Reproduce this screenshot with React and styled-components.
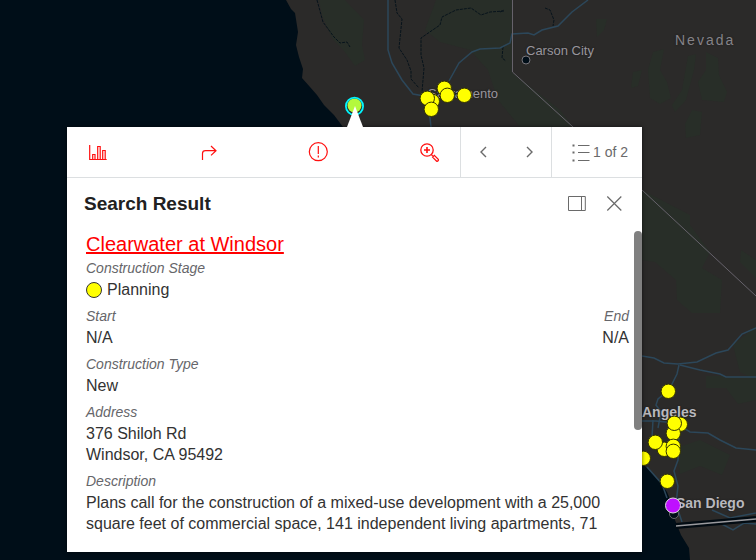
import React from "react";
import styled, { createGlobalStyle, css } from "styled-components";

const GlobalStyle = createGlobalStyle`
  * {
    box-sizing: border-box;
  }

  body {
    margin: 0;
    background: #000e18;
    font-family: "Liberation Sans", Arial, sans-serif;
  }
`;

const Page = styled.main`
  position: relative;
  display: flex;
  height: 100vh;
  min-height: 360px;
  padding: 127px 114px 8px 67px;
  overflow: hidden;
`;

const MapLayer = styled.div`
  position: absolute;
  inset: 0;
`;

const MapDrawing = styled.svg`
  position: absolute;
  inset: 0;
  width: 100%;
  height: 100%;
`;

const PlaceName = styled.span`
  position: absolute;
  font-size: 13px;
  line-height: 16px;
  color: #99969d;
  white-space: nowrap;
  text-shadow: 0 0 2px #1c1c1c;

  ${(props) =>
    props.$kind === "city" &&
    css`
      font-size: 14px;
      font-weight: 700;
      color: #b9b8bd;
    `}

  ${(props) =>
    props.$kind === "state" &&
    css`
      font-size: 14px;
      letter-spacing: 2px;
      color: #858388;
    `}
`;

const Popup = styled.section`
  position: relative;
  display: flex;
  flex: 1;
  flex-direction: column;
  min-width: 0;
  background: #fff;
  box-shadow: 0 0 4px rgba(0, 0, 0, 0.6);
`;

const Pointer = styled.svg`
  position: absolute;
  left: 50%;
  bottom: 100%;
  width: 16px;
  height: 21px;
  margin-left: -8px;
`;

const Toolbar = styled.div`
  display: flex;
  flex-shrink: 0;
  height: 51px;
  border-bottom: 1px solid #dcdfe1;
`;

const ToolbarGroup = styled.div`
  display: flex;
  align-items: center;
  justify-content: space-between;
  flex: ${(props) => (props.$grow ? 1 : "none")};
  padding: 0 ${(props) => (props.$grow ? 18 : 10)}px;
  border-right: 1px solid #dcdfe1;
  gap: 22px;
`;

const IconButton = styled.button`
  display: flex;
  width: 24px;
  height: 24px;
  padding: 0;
  border: 0;
  background: none;
  color: ${(props) => (props.$accent ? "#ff0f0f" : "#6a6a6a")};
  cursor: pointer;
`;

const PagerButton = styled.button`
  display: flex;
  align-items: center;
  width: 90px;
  padding: 0 0 0 17px;
  border: 0;
  background: none;
  font-family: inherit;
  font-size: 14px;
  color: #6a6a6a;
  white-space: nowrap;
  cursor: pointer;
`;

const Icon = styled.svg`
  flex-shrink: 0;
  width: 24px;
  height: 24px;
  fill: none;
  stroke: currentColor;
`;

const Header = styled.header`
  display: flex;
  flex-shrink: 0;
  align-items: center;
  justify-content: space-between;
  height: 52px;
  padding: 0 16px 0 17px;
`;

const Title = styled.h2`
  margin: 0;
  font-size: 19px;
  line-height: 24px;
  color: #212121;
`;

const HeaderActions = styled.div`
  display: flex;
  gap: 14px;
`;

const Body = styled.div`
  display: flex;
  flex: 1;
  min-height: 0;
  padding-bottom: 16px;
`;

const Content = styled.div`
  display: flex;
  flex: 1;
  flex-direction: column;
  gap: 6px;
  min-width: 0;
  padding: 2px 5px 0 19px;
  overflow: hidden;
`;

const ScrollThumb = styled.div`
  width: 8px;
  height: 65%;
  margin-top: 1px;
  border-radius: 4px;
  background: #808080;
`;

const ResultLink = styled.a`
  align-self: flex-start;
  margin-bottom: -5px;
  font-size: 20px;
  line-height: 25px;
  color: #ff0000;
  text-decoration-thickness: 2px;
`;

const FieldRow = styled.div`
  display: flex;
  justify-content: space-between;
`;

const Field = styled.div`
  text-align: ${(props) => props.$align || "left"};
  line-height: 21px;
`;

const FieldLabel = styled.div`
  font-size: 14px;
  font-style: italic;
  color: #66666a;
`;

const FieldValue = styled.div`
  display: flex;
  align-items: center;
  gap: 5px;
  font-size: 16px;
  color: #323232;
`;

const StageDot = styled.span`
  width: 16px;
  height: 16px;
  border: 1px solid #333;
  border-radius: 50%;
  background: #ffff00;
`;

const forests = [
  "M319 0H345L364 20L362 45L365 60L355 66L345 52L332 38L322 15Z",
  "M436 0H512V72L560 110L573 127H520L498 100L488 70L470 50L440 42L425 30Z",
  "M596 19H607L604 30L597 37Z",
  "M653 52L664 49L660 70L667 82L671 98L660 104L650 98L648 70Z",
  "M688 56L696 54L694 70L686 100L675 112L672 105L682 90Z",
  "M706 52L718 58L719 75L727 92L724 102L702 100L698 82L706 70Z",
  "M692 110L702 112L700 135L686 138L685 124Z",
  "M633 72L642 70L638 86L631 88Z",
  "M642 190L690 215V225L710 252L702 268L722 280L720 313H692L677 300L676 280L655 262L642 260Z",
  "M741 250L756 260V278L740 262Z",
  "M733 345L756 326V380L740 372Z",
  "M706 376H756V400L738 404L726 388L706 388Z",
  "M676 448L700 440L730 455L722 475L700 466L680 474Z",
];

const waterways = [
  "M388 0V50L392 63L402 80L413 94L424 96L430 118L431 127",
  "M449 81L459 63L472 52L480 49L500 48L510 43L512 34L528 33L534 35L542 30L558 26L572 12L588 0",
  "M642 356L654 358L664 363L678 364L697 362L716 353L728 350L742 334L756 328",
  "M680 365L700 370L720 374L726 377L756 377",
  "M679 365L677 374L669 390L658 399L656 405L661 412L658 428",
  "M642 421H656L676 423L690 432L708 433L720 440L736 448L756 450",
  "M653 420L652 438M679 438L678 460L674 471L678 486L676 504L682 522",
  "M647 467L662 484L667 498",
  "M712 510L730 518L756 513M718 522L733 530L744 523L756 524",
];

const streams = [
  "M317 0L323 22L334 37L340 43L347 42L350 47",
  "M395 0L397 13L402 19L399 48L407 60L411 71L411 79L419 88",
  "M504 11L490 12L481 15L471 8L456 10L442 17L440 25L421 38V55L424 68L422 92L426 101",
  "M545 8L550 10L554 20L553 26M500 12L504 10M503 47L502 58L506 61",
];

const projects = [
  [432, 101],
  [427, 98],
  [431, 109],
  [444, 88],
  [447, 95],
  [464, 95],
  [668, 391],
  [680, 424],
  [673, 433],
  [674, 423],
  [664, 449],
  [673, 446],
  [655, 442],
  [673, 451],
  [643, 458],
  [667, 481],
];

const places = [
  { name: "Nevada", x: 675, y: 32, kind: "state" },
  { name: "Carson City", x: 526, y: 43, kind: "town" },
  { name: "Sacramento", x: 428, y: 86, kind: "town" },
  { name: "Angeles", x: 642, y: 404, kind: "city" },
  { name: "San Diego", x: 676, y: 495, kind: "city" },
];

function BaseMap() {
  return (
    <MapLayer>
      <MapDrawing
        viewBox="0 0 756 560"
        preserveAspectRatio="xMinYMin slice"
        fill="none"
        aria-hidden="true"
      >
        <path
          fill="#2b2a29"
          d="M286 0L291 9L295 13L298 32L296 45L299 57L303 69L302 78L310 87L317 95L324 105L334 115L343 127L642 463L657 478L667 492L672 504L675 520L681 535L689 548L690 560H756V0Z"
        />
        {forests.map((d) => (
          <path key={d} d={d} fill="#282e28" />
        ))}
        {streams.map((d) => (
          <path key={d} d={d} stroke="#07131b" strokeDasharray="3 1" />
        ))}
        {waterways.map((d) => (
          <path key={d} d={d} stroke="#2c475a" strokeWidth="1.5" />
        ))}
        <path d="M512.5 0V72L573 127L642 190L756 296" stroke="#66626b" />
        <path d="M676 526L756 519" stroke="#020b12" strokeWidth="6" />
        <path d="M676 526L756 519" stroke="#9a9a9e" strokeWidth="1.3" />
        <circle cx="526" cy="60" r="4" fill="#000e18" stroke="#77757b" />
        <circle cx="674" cy="514" r="4.5" fill="#000e18" stroke="#66656b" />
      </MapDrawing>

      {places.map((place) => (
        <PlaceName
          key={place.name}
          $kind={place.kind}
          style={{ left: place.x, top: place.y }}
        >
          {place.name}
        </PlaceName>
      ))}

      <MapDrawing
        viewBox="0 0 756 560"
        preserveAspectRatio="xMinYMin slice"
        aria-hidden="true"
      >
        {projects.map(([x, y]) => (
          <circle
            key={`${x}-${y}`}
            cx={x + 0.3}
            cy={y + 0.3}
            r="7.2"
            fill="#ffff00"
            stroke="#333300"
          />
        ))}
        <circle cx="673" cy="505.5" r="7.5" fill="#bf0fff" stroke="#ddd" />
        <circle cx="354.5" cy="105.5" r="7" fill="#b4f93d" />
        <circle
          cx="354.5"
          cy="106.3"
          r="8.6"
          fill="none"
          stroke="#00f6ff"
          strokeWidth="1.8"
        />
      </MapDrawing>
    </MapLayer>
  );
}

function PopupToolbar() {
  return (
    <Toolbar>
      <ToolbarGroup $grow>
        <IconButton $accent aria-label="Statistics">
          <Icon viewBox="0 0 24 24">
            <path
              d="M4.7 5V19.5H21.7M7.7 19V14.5H10V19M12.7 19V6.5H15.2V19M17.7 19V10.5H20.2V19"
              strokeWidth="1.2"
            />
          </Icon>
        </IconButton>
        <IconButton $accent aria-label="Directions">
          <Icon viewBox="0 0 24 24">
            <path
              d="M6.5 20V13.5Q6.5 10.7 9.5 10.7H20M15 6L20 10.7L15 15.4"
              strokeWidth="1.2"
            />
          </Icon>
        </IconButton>
        <IconButton $accent aria-label="Report">
          <Icon viewBox="0 0 24 24">
            <circle cx="11.3" cy="11.7" r="9" strokeWidth="1.2" />
            <path d="M11.3 6V14M11.3 15.5V17.5" strokeWidth="1.2" />
          </Icon>
        </IconButton>
        <IconButton $accent aria-label="Zoom to">
          <Icon viewBox="0 0 24 24">
            <circle cx="9" cy="10" r="6.2" strokeWidth="1.3" />
            <path d="M6 10H12M9 7V13" strokeWidth="1.6" />
            <path
              d="M13.3 14.5L14.7 15.9M14.6 17.1L16.3 15.4L20.3 19.4Q20.7 20.2 20.1 20.8Q19.4 21.5 18.6 21.1Z"
              strokeWidth="1.3"
            />
          </Icon>
        </IconButton>
      </ToolbarGroup>
      <ToolbarGroup>
        <IconButton aria-label="Previous">
          <Icon viewBox="0 0 24 24">
            <path d="M15 7L10 12L15 17" strokeWidth="1.4" />
          </Icon>
        </IconButton>
        <IconButton aria-label="Next">
          <Icon viewBox="0 0 24 24">
            <path d="M10 7L15 12L10 17" strokeWidth="1.4" />
          </Icon>
        </IconButton>
      </ToolbarGroup>
      <PagerButton>
        <Icon viewBox="0 0 24 24">
          <path d="M9 5.5H20.5M9 12.5H20.5M9 20.5H20.5" strokeWidth="1.2" />
          <path d="M3.5 5.5H5.5M3.5 12.5H5.5M3.5 20.5H5.5" strokeWidth="2" />
        </Icon>
        1 of 2
      </PagerButton>
    </Toolbar>
  );
}

function App() {
  return (
    <>
      <GlobalStyle />
      <Page>
        <BaseMap />

        <Popup>
          <Pointer viewBox="0 0 16 21" aria-hidden="true">
            <path d="M8 0L16 21H0Z" fill="#fff" />
          </Pointer>

          <PopupToolbar />

          <Header>
            <Title>Search Result</Title>
            <HeaderActions>
              <IconButton aria-label="Dock">
                <Icon viewBox="0 0 24 24">
                  <path d="M4.5 4.5H21.3V18.5H4.5ZM17.5 4.5V18.5" />
                </Icon>
              </IconButton>
              <IconButton aria-label="Close">
                <Icon viewBox="0 0 24 24">
                  <path d="M5.3 4.5L19.3 18.5M19.3 4.5L5.3 18.5" strokeWidth="1.2" />
                </Icon>
              </IconButton>
            </HeaderActions>
          </Header>

          <Body>
            <Content>
              <ResultLink href="#clearwater">Clearwater at Windsor</ResultLink>

              <Field>
                <FieldLabel>Construction Stage</FieldLabel>
                <FieldValue>
                  <StageDot />
                  Planning
                </FieldValue>
              </Field>

              <FieldRow>
                <Field>
                  <FieldLabel>Start</FieldLabel>
                  <FieldValue>N/A</FieldValue>
                </Field>
                <Field $align="right">
                  <FieldLabel>End</FieldLabel>
                  <FieldValue>N/A</FieldValue>
                </Field>
              </FieldRow>

              <Field>
                <FieldLabel>Construction Type</FieldLabel>
                <FieldValue>New</FieldValue>
              </Field>

              <Field>
                <FieldLabel>Address</FieldLabel>
                <FieldValue>
                  376 Shiloh Rd
                  <br />
                  Windsor, CA 95492
                </FieldValue>
              </Field>

              <Field>
                <FieldLabel>Description</FieldLabel>
                <FieldValue>
                  Plans call for the construction of a mixed-use development
                  with a 25,000 square feet of commercial space, 141 independent
                  living apartments, 71
                </FieldValue>
              </Field>
            </Content>
            <ScrollThumb />
          </Body>
        </Popup>
      </Page>
    </>
  );
}

export default App;
